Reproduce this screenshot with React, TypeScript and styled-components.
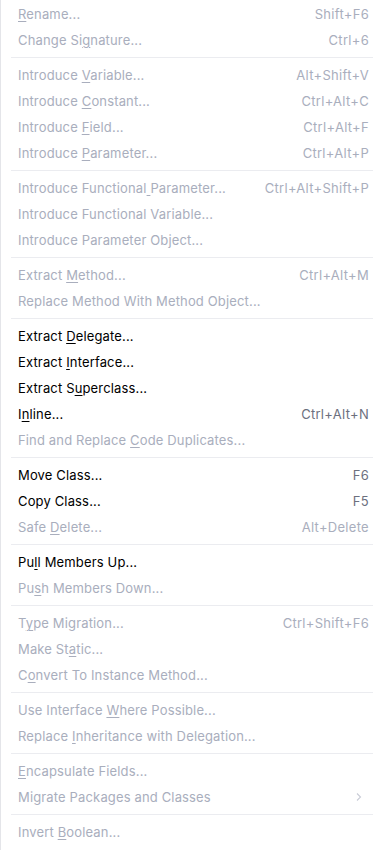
import React from 'react';
import styled, { createGlobalStyle } from 'styled-components';

interface IItem {
    label: string;
    mnemonic?: number;
    shortcut?: string;
    enabled?: boolean;
    submenu?: boolean;
}

type Group = IItem[];

const groups: Group[] = [
    [
        { label: 'Rename...', mnemonic: 0, shortcut: 'Shift+F6' },
        { label: 'Change Signature...', mnemonic: 9, shortcut: 'Ctrl+6' },
    ],
    [
        { label: 'Introduce Variable...', mnemonic: 10, shortcut: 'Alt+Shift+V' },
        { label: 'Introduce Constant...', mnemonic: 10, shortcut: 'Ctrl+Alt+C' },
        { label: 'Introduce Field...', mnemonic: 10, shortcut: 'Ctrl+Alt+F' },
        { label: 'Introduce Parameter...', mnemonic: 10, shortcut: 'Ctrl+Alt+P' },
    ],
    [
        { label: 'Introduce Functional Parameter...', mnemonic: 20, shortcut: 'Ctrl+Alt+Shift+P' },
        { label: 'Introduce Functional Variable...' },
        { label: 'Introduce Parameter Object...' },
    ],
    [
        { label: 'Extract Method...', mnemonic: 8, shortcut: 'Ctrl+Alt+M' },
        { label: 'Replace Method With Method Object...' },
    ],
    [
        { label: 'Extract Delegate...', mnemonic: 8, enabled: true },
        { label: 'Extract Interface...', mnemonic: 8, enabled: true },
        { label: 'Extract Superclass...', mnemonic: 9, enabled: true },
        { label: 'Inline...', mnemonic: 1, shortcut: 'Ctrl+Alt+N', enabled: true },
        { label: 'Find and Replace Code Duplicates...', mnemonic: 17 },
    ],
    [
        { label: 'Move Class...', shortcut: 'F6', enabled: true },
        { label: 'Copy Class...', shortcut: 'F5', enabled: true },
        { label: 'Safe Delete...', mnemonic: 5, shortcut: 'Alt+Delete' },
    ],
    [
        { label: 'Pull Members Up...', mnemonic: 2, enabled: true },
        { label: 'Push Members Down...', mnemonic: 2 },
    ],
    [
        { label: 'Type Migration...', mnemonic: 1, shortcut: 'Ctrl+Shift+F6' },
        { label: 'Make Static...', mnemonic: 7 },
        { label: 'Convert To Instance Method...', mnemonic: 1 },
    ],
    [
        { label: 'Use Interface Where Possible...', mnemonic: 14 },
        { label: 'Replace Inheritance with Delegation...', mnemonic: 8 },
    ],
    [
        { label: 'Encapsulate Fields...', mnemonic: 0 },
        { label: 'Migrate Packages and Classes', submenu: true },
    ],
    [
        { label: 'Invert Boolean...', mnemonic: 7 },
    ],
];

const Label: React.FC<{ text: string; mnemonic?: number }> = ({ text, mnemonic }) => {
    if (mnemonic === undefined) return <>{text}</>;
    return (
        <>
            {text.slice(0, mnemonic)}
            <Mnemonic>{text[mnemonic]}</Mnemonic>
            {text.slice(mnemonic + 1)}
        </>
    );
};

const App: React.FC = () => {
    return (
        <>
            <Global />
            <Menu>
                {groups.map((group, gi) => (
                    <React.Fragment key={gi}>
                        {gi > 0 && <Separator />}
                        {group.map((item) => (
                            <Row key={item.label} $enabled={!!item.enabled}>
                                <Text>
                                    <Label text={item.label} mnemonic={item.mnemonic} />
                                </Text>
                                {item.shortcut && <Shortcut>{item.shortcut}</Shortcut>}
                                {item.submenu && (
                                    <Arrow width="8" height="10" viewBox="0 0 8 10">
                                        <path d="M2 1.5 L5.5 5 L2 8.5" fill="none" stroke="#c9ccd6" strokeWidth="1.1" />
                                    </Arrow>
                                )}
                            </Row>
                        ))}
                    </React.Fragment>
                ))}
            </Menu>
        </>
    );
};

const Global = createGlobalStyle`
    html, body {
        margin: 0;
        padding: 0;
        background: #ffffff;
    }
    body {
        font-family: Inter, "Noto Sans", sans-serif;
    }
`;

const Menu = styled.div`
    width: 383px;
    height: 850px;
    box-sizing: border-box;
    border-left: 1px solid #e4e5e9;
    padding: 1px 10px 0 10px;
    display: flex;
    flex-direction: column;
    background: #ffffff;
`;

const Row = styled.div<{ $enabled: boolean }>`
    height: 26px;
    display: flex;
    align-items: center;
    padding: 0 4px 0 7px;
    font-size: 13px;
    color: ${(p) => (p.$enabled ? '#000000' : '#a9aebd')};
    --shortcut: ${(p) => (p.$enabled ? '#6c707e' : '#a9aebd')};
`;

const Text = styled.span`
    flex: 1;
    white-space: nowrap;
    letter-spacing: 0.15px;
`;

const Mnemonic = styled.span`
    text-decoration: underline;
    text-underline-offset: 2px;
    text-decoration-thickness: 1px;
`;

const Shortcut = styled.span`
    color: var(--shortcut);
    white-space: nowrap;
    letter-spacing: 0.3px;
`;

const Arrow = styled.svg`
    margin-right: 6px;
`;

const Separator = styled.div`
    height: 9px;
    display: flex;
    align-items: center;
    &::after {
        content: '';
        flex: 1;
        height: 1px;
        background: #ebecf0;
    }
`;

export default App;
